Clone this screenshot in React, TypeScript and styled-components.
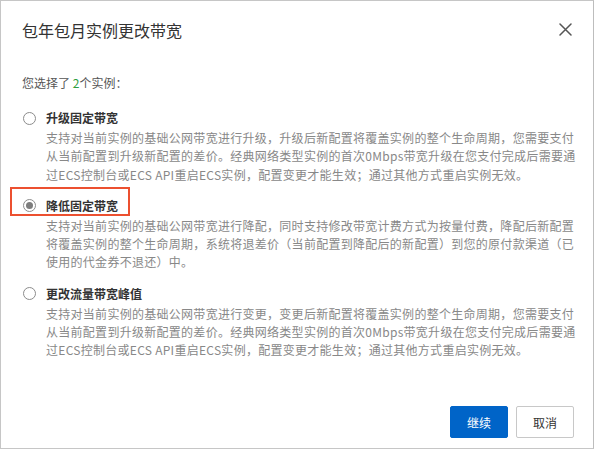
import React, { useState } from "react";
import styled, { createGlobalStyle } from "styled-components";

const GlobalStyle = createGlobalStyle`
  html, body {
    margin: 0;
    padding: 0;
    background: #ffffff;
  }
  body {
    font-family: "Noto Sans CJK SC", "Liberation Sans", sans-serif;
  }
`;

const Dialog = styled.div`
  width: 594px;
  height: 449px;
  box-sizing: border-box;
  border: 1px solid #c6c6c6;
  border-right-color: #bdbdbd;
  background: #ffffff;
  display: flex;
  flex-direction: column;
  position: relative;
`;

const Header = styled.div`
  height: 56px;
  display: flex;
  align-items: center;
  justify-content: space-between;
  padding: 0 20px 0 21px;
`;

const Title = styled.div`
  font-size: 16px;
  color: #333333;
  line-height: 20px;
  padding-top: 1px;
`;

const CloseButton = styled.button`
  width: 16px;
  height: 16px;
  padding: 0;
  border: none;
  background: transparent;
  cursor: pointer;
  display: flex;
  align-items: center;
  justify-content: center;
`;

const Body = styled.div`
  flex: 1;
  padding: 17px 21px 0 21px;
`;

const Summary = styled.div`
  font-size: 12px;
  line-height: 18px;
  color: #555555;
  margin-bottom: 17px;
`;

const Count = styled.span`
  color: #2f9e3f;
`;

const OptionList = styled.div`
  display: flex;
  flex-direction: column;
  gap: 13px;
`;

const Option = styled.label`
  display: grid;
  grid-template-columns: 24px 1fr;
  cursor: pointer;
`;

const RadioCell = styled.div`
  height: 18px;
  display: flex;
  align-items: center;
`;

const Radio = styled.span<{ $checked: boolean }>`
  width: 13px;
  height: 13px;
  box-sizing: border-box;
  border-radius: 50%;
  border: 1px solid #8c8c8c;
  display: flex;
  align-items: center;
  justify-content: center;
  margin-left: 0.5px;

  &::after {
    content: "";
    width: 7px;
    height: 7px;
    border-radius: 50%;
    background: #7d7d7d;
    display: ${(p) => (p.$checked ? "block" : "none")};
  }
`;

const OptionLabel = styled.div`
  font-size: 12px;
  line-height: 18px;
  font-weight: 700;
  color: #333333;
  margin-bottom: 2px;
`;

const OptionDesc = styled.div`
  grid-column: 2;
  font-size: 12px;
  line-height: 18.3px;
  color: #888888;
  letter-spacing: 0.28px;
  white-space: nowrap;
`;

const Footer = styled.div`
  display: flex;
  justify-content: flex-end;
  gap: 8px;
  padding: 0 19px 10px 0;
`;

const Button = styled.button<{ $primary?: boolean }>`
  width: 58px;
  height: 32px;
  box-sizing: border-box;
  border-radius: 2px;
  font-family: "Noto Sans CJK SC", "Liberation Sans", sans-serif;
  font-size: 12px;
  cursor: pointer;
  border: 1px solid ${(p) => (p.$primary ? "#0064c8" : "#c8c8c8")};
  background: ${(p) => (p.$primary ? "#0064c8" : "#ffffff")};
  color: ${(p) => (p.$primary ? "#ffffff" : "#333333")};
`;

const Highlight = styled.div`
  position: absolute;
  left: 9px;
  top: 186px;
  width: 120px;
  height: 29px;
  box-sizing: border-box;
  border: 2px solid #ec5030;
  pointer-events: none;
`;

const options = [
  {
    label: "升级固定带宽",
    lines: [
      "支持对当前实例的基础公网带宽进行升级，升级后新配置将覆盖实例的整个生命周期，您需要支付",
      "从当前配置到升级新配置的差价。经典网络类型实例的首次0Mbps带宽升级在您支付完成后需要通",
      "过ECS控制台或ECS API重启ECS实例，配置变更才能生效；通过其他方式重启实例无效。",
    ],
  },
  {
    label: "降低固定带宽",
    lines: [
      "支持对当前实例的基础公网带宽进行降配，同时支持修改带宽计费方式为按量付费，降配后新配置",
      "将覆盖实例的整个生命周期，系统将退差价（当前配置到降配后的新配置）到您的原付款渠道（已",
      "使用的代金券不退还）中。",
    ],
  },
  {
    label: "更改流量带宽峰值",
    lines: [
      "支持对当前实例的基础公网带宽进行变更，变更后新配置将覆盖实例的整个生命周期，您需要支付",
      "从当前配置到升级新配置的差价。经典网络类型实例的首次0Mbps带宽升级在您支付完成后需要通",
      "过ECS控制台或ECS API重启ECS实例，配置变更才能生效；通过其他方式重启实例无效。",
    ],
  },
];

export default function App() {
  const [selected, setSelected] = useState(1);

  return (
    <>
      <GlobalStyle />
      <Dialog>
        <Header>
          <Title>包年包月实例更改带宽</Title>
          <CloseButton aria-label="关闭">
            <svg width="13" height="13" viewBox="0 0 13 13">
              <path
                d="M1 1 L12 12 M12 1 L1 12"
                stroke="#555555"
                strokeWidth="1.5"
                strokeLinecap="round"
              />
            </svg>
          </CloseButton>
        </Header>
        <Body>
          <Summary>
            您选择了 <Count>2</Count>个实例：
          </Summary>
          <OptionList>
            {options.map((opt, idx) => (
              <Option key={idx} onClick={() => setSelected(idx)}>
                <RadioCell>
                  <Radio $checked={selected === idx} />
                </RadioCell>
                <OptionLabel>{opt.label}</OptionLabel>
                {opt.lines.map((line, i) => (
                  <OptionDesc key={i}>{line}</OptionDesc>
                ))}
              </Option>
            ))}
          </OptionList>
        </Body>
        <Footer>
          <Button $primary>继续</Button>
          <Button>取消</Button>
        </Footer>
        <Highlight />
      </Dialog>
    </>
  );
}
